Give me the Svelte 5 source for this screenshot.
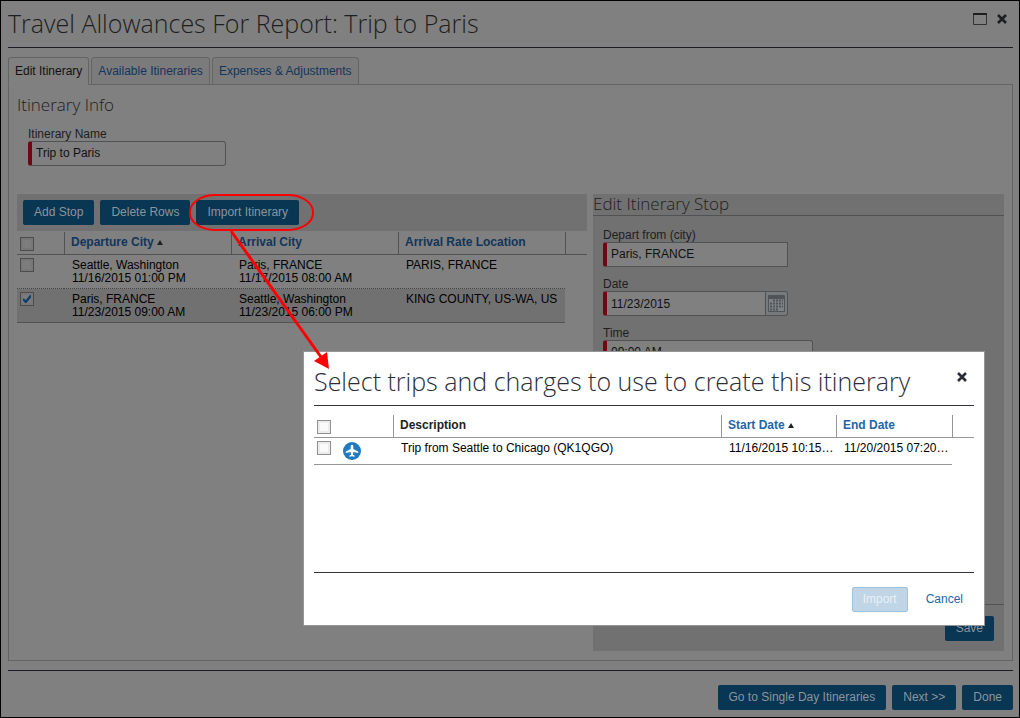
<script>
  let itineraryName = $state('Trip to Paris');
  let departCity = $state('Paris, FRANCE');
  let date = $state('11/23/2015');
  let time = $state('09:00 AM');
  const stops = $state([
    { checked: false, from: 'Seattle, Washington', departs: '11/16/2015 01:00 PM', to: 'Paris, FRANCE', arrives: '11/17/2015 08:00 AM', rate: 'PARIS, FRANCE' },
    { checked: true, from: 'Paris, FRANCE', departs: '11/23/2015 09:00 AM', to: 'Seattle, Washington', arrives: '11/23/2015 06:00 PM', rate: 'KING COUNTY, US-WA, US' }
  ]);
</script>

{#snippet cross()}
  <svg width="10" height="10" viewBox="0 0 10 10" aria-hidden="true"><path d="M1 1 9 9M9 1 1 9" fill="none" stroke="currentColor" stroke-width="2.6" /></svg>
{/snippet}

<div class="page">
  <header class="top">
    <h1>Travel Allowances For Report: Trip to Paris</h1>
    <div class="window-tools">
      <button class="icon" aria-label="Maximize">
        <svg width="14" height="12" viewBox="0 0 14 12" aria-hidden="true"><path d="M.5 1v10.5h13V1" fill="none" stroke="currentColor" stroke-opacity=".8" /><path d="M0 1h14" stroke="currentColor" stroke-width="2" /></svg>
      </button>
      <button class="icon" aria-label="Close">{@render cross()}</button>
    </div>
  </header>

  <nav class="tabs">
    <button class="tab active">Edit Itinerary</button>
    <button class="tab">Available Itineraries</button>
    <button class="tab">Expenses &amp; Adjustments</button>
  </nav>

  <main class="panel">
    <section class="info">
      <h2>Itinerary Info</h2>
      <div class="field name">
        <label for="name">Itinerary Name</label>
        <input id="name" type="text" bind:value={itineraryName} />
      </div>
    </section>

    <div class="columns">
      <section class="stops">
        <div class="toolbar">
          <button class="btn">Add Stop</button>
          <button class="btn">Delete Rows</button>
          <div class="marked">
            <button class="btn">Import Itinerary</button>
            <svg class="callout" width="150" height="182" viewBox="0 0 150 182" aria-hidden="true">
              <rect x="3" y="2" width="123" height="35" rx="25" ry="17" fill="none" stroke="red" stroke-width="2" />
              <path d="M44 38 134 164" stroke="red" stroke-width="3" />
              <path d="M142 176 127 168 140 159z" fill="red" />
            </svg>
          </div>
        </div>
        <table class="grid">
          <colgroup><col class="c-check" /><col /><col /><col /><col class="c-end" /></colgroup>
          <thead>
            <tr>
              <th><input type="checkbox" aria-label="Select all stops" /></th>
              <th><a href="#departure">Departure City</a><span class="sort"></span></th>
              <th><a href="#arrival">Arrival City</a></th>
              <th><a href="#rate">Arrival Rate Location</a></th>
              <th></th>
            </tr>
          </thead>
          <tbody>
            {#each stops as stop}
              <tr class:selected={stop.checked}>
                <td><input type="checkbox" aria-label="Select stop" bind:checked={stop.checked} /></td>
                <td>{stop.from}<br />{stop.departs}</td>
                <td>{stop.to}<br />{stop.arrives}</td>
                <td>{stop.rate}</td>
              </tr>
            {/each}
          </tbody>
        </table>
      </section>

      <section class="editor">
        <h2>Edit Itinerary Stop</h2>
        <div class="fields">
          <div class="field">
            <label for="city">Depart from (city)</label>
            <input id="city" class="square" type="text" bind:value={departCity} />
          </div>
          <div class="field">
            <label for="date">Date</label>
            <div class="date">
              <input id="date" type="text" bind:value={date} />
              <button aria-label="Choose date">
                <svg width="17" height="17" viewBox="0 0 17 17" aria-hidden="true">
                  <rect width="17" height="17" rx="1" fill="#505458" />
                  <path d="M1 4h15v12H1z" fill="#7d8286" />
                  <path d="M5 6h10M2 9h13M2 12h13M2 15h9" transform="translate(0 -.5)" stroke="#505458" stroke-width="2" stroke-dasharray="2 1" />
                </svg>
              </button>
            </div>
          </div>
          <div class="field time">
            <label for="time">Time</label>
            <input id="time" type="text" bind:value={time} />
          </div>
        </div>
        <div class="save"><button class="btn">Save</button></div>
      </section>
    </div>
  </main>

  <footer class="bottom">
    <button class="btn">Go to Single Day Itineraries</button>
    <button class="btn">Next &gt;&gt;</button>
    <button class="btn">Done</button>
  </footer>

  <div class="dialog" role="dialog" aria-labelledby="dialog-title">
    <header>
      <h1 id="dialog-title">Select trips and charges to use to create this itinerary</h1>
      <button class="icon" aria-label="Close dialog">{@render cross()}</button>
    </header>
    <div class="trips">
      <table class="grid">
        <colgroup><col class="d-check" /><col /><col class="d-start" /><col class="d-end" /><col class="c-end" /></colgroup>
        <thead>
          <tr>
            <th><input type="checkbox" aria-label="Select all trips" /></th>
            <th>Description</th>
            <th><a href="#start">Start Date</a><span class="sort"></span></th>
            <th><a href="#end">End Date</a></th>
            <th></th>
          </tr>
        </thead>
        <tbody>
          <tr>
            <td>
              <div class="pick">
                <input type="checkbox" aria-label="Select trip" />
                <svg width="18" height="19" viewBox="0 -1 18 19" aria-hidden="true">
                  <circle cx="9" cy="9" r="9" fill="#2079c1" />
                  <path d="M9 2.8c.9 0 1.3.8 1.3 1.7v2.4l4.900 2.600v1.600l-4.900-1.200-.3 2.800 1.700 1.100v1L9 14.200l-2.700.6v-1L8 12.700l-.3-2.800-4.900 1.200V9.500l4.900-2.600V4.500c0-.9.4-1.700 1.300-1.700z" fill="#fff" />
                </svg>
              </div>
            </td>
            <td>Trip from Seattle to Chicago (QK1QGO)</td>
            <td>11/16/2015 10:15…</td>
            <td>11/20/2015 07:20…</td>
          </tr>
        </tbody>
      </table>
    </div>
    <div class="actions">
      <button class="btn import" disabled>Import</button>
      <button class="cancel">Cancel</button>
    </div>
  </div>
</div>

<style>
  :global(body) { margin: 0; }
  .page, .page * { box-sizing: border-box; }
  .page {
    position: relative;
    display: flex;
    flex-direction: column;
    min-height: 100vh;
    padding: 0 6px 7px 7px;
    border: 1px solid #000;
    background: #808080;
    color: #1d1e20;
    font: 12px/13px "Liberation Sans", Arial, sans-serif;
  }
  button, input { font: inherit; color: inherit; margin: 0; }
  button { cursor: pointer; }
  h1, h2 { margin: 0; font-family: "Open Sans", sans-serif; font-weight: 300; }
  h1 { font-size: 25px; line-height: 35px; white-space: nowrap; }
  h2 { font-size: 17px; line-height: 21px; }
  .icon { display: flex; padding: 0; border: 0; background: none; }
  .top { display: flex; justify-content: space-between; height: 47px; padding: 5px 6px 0 0; border-bottom: 1px solid #1c1c22; }
  .window-tools { display: flex; gap: 10px; height: 26px; align-items: center; }
  .tabs { display: flex; gap: 2px; margin-top: 9px; position: relative; }
  .tab { height: 28px; padding: 0 6px; border: 1px solid #636465; border-radius: 3px 3px 0 0; background: #7b7b7b; color: #12355a; }
  .tab.active { border-bottom-color: #808080; background: #808080; color: #111; }
  .panel { display: flex; flex-direction: column; flex: 1; margin-top: -1px; padding: 0 8px 9px; border: 1px solid #636465; }
  .info { padding-top: 9px; }
  .name { width: 198px; margin: 13px 0 0 11px; }
  .field { display: flex; flex-direction: column; }
  input[type="text"] {
    width: 100%; height: 25px; padding: 0 4px 2px;
    border: 1px solid #515253; border-left: 4px solid #700713; border-radius: 3px;
    background: #808080; color: #111;
  }
  input.square { border-radius: 3px 0 0 3px; }
  .columns { display: flex; flex: 1; gap: 6px; margin-top: 28px; }
  .stops { flex: 0 0 570px; }
  .toolbar { display: flex; gap: 6px; height: 37px; padding: 6px; background: #717171; }
  .btn { height: 25px; padding: 0 11px; border: 0; border-radius: 2px; background: #083653; color: #8b959e; white-space: nowrap; }
  .marked { position: relative; }
  .callout { position: absolute; left: -9px; top: -7px; z-index: 3; pointer-events: none; }
  .grid { width: 100%; border-collapse: separate; border-spacing: 0; table-layout: fixed; color: #000; }
  .c-check { width: 47px; }
  .c-end { width: 22px; }
  th { height: 24px; padding: 0 7px; border-bottom: 1px solid #515253; text-align: left; background: linear-gradient(#515253, #515253) left 0 top 1px / 1px 100% no-repeat; }
  .grid th:first-child { background: none; }
  th a { color: #12355a; text-decoration: none; }
  td { padding: 4px 8px 3px; vertical-align: top; border-bottom: 1px dotted #444; white-space: nowrap; }
  .grid th:first-child, .grid td:first-child { padding-top: 3px; padding-left: 3px; }
  .selected td { background: #717171; border-bottom: 1px solid #515253; }
  .sort { display: inline-block; margin: 0 0 1px 3px; border: 3px solid transparent; border-top: 0; border-bottom: 5px solid #222; }
  input[type="checkbox"] { appearance: none; display: block; width: 14px; height: 14px; border: 1px solid #4b4c4d; background: #7d7d7d; box-shadow: inset 0 0 0 2px #777; }
  input[type="checkbox"]:checked { background: url("data:image/svg+xml,%3Csvg xmlns='http://www.w3.org/2000/svg' viewBox='0 0 12 12'%3E%3Cpath d='M2 6 4.800 9 10 2.500' fill='none' stroke='%23103e6a' stroke-width='2.400'/%3E%3C/svg%3E") #7d7d7d; }
  .editor { display: flex; flex-direction: column; flex: 1; background: #717171; }
  .editor h2 { height: 22px; line-height: 19px; border-bottom: 1px solid #515253; }
  .fields { display: flex; flex-direction: column; flex: 1; gap: 11px; padding: 13px 10px 0; border-bottom: 1px solid #515253; }
  .fields .field { width: 185px; }
  .fields .time { width: 210px; }
  .date { display: flex; }
  .date input[type="text"] { flex: 1; min-width: 0; border-radius: 3px 0 0 3px; padding-bottom: 0; }
  .date button { display: flex; align-items: center; justify-content: center; width: 22px; padding: 0; border: 1px solid #515253; border-left: 0; border-radius: 0 3px 3px 0; background: #787b7e; }
  .save { display: flex; justify-content: flex-end; padding: 11px 10px 10px; }
  .bottom { display: flex; justify-content: flex-end; gap: 6px; margin-top: 9px; padding-top: 14px; border-top: 1px solid #1c1c22; }

  .dialog { position: absolute; left: 302px; right: 34px; top: 350px; z-index: 2; display: flex; flex-direction: column; height: 275px; padding: 10px; border: 1px solid #969696; background: #fff; color: #2b2e38; }
  .dialog header { display: flex; justify-content: space-between; align-items: flex-start; padding: 2px 7px 6px 0; border-bottom: 1px solid #34363d; }
  .dialog header .icon { margin-top: 8px; }
  .trips { flex: 1; padding-top: 8px; border-bottom: 1px solid #34363d; }
  .trips th { border-color: #949698; background-image: linear-gradient(#949698, #949698); color: #222; }
  .trips a, .cancel { color: #1d66a8; }
  .trips td { height: 27px; padding-top: 4px; padding-bottom: 0; border-bottom: 1px solid #949698; }
  .trips input[type="checkbox"] { border-color: #8e9092; background: #fafafa; box-shadow: inset 0 0 0 2px #ececec; }
  .d-check { width: 79px; }
  .d-start { width: 115px; }
  .d-end { width: 116px; }
  .pick { display: flex; gap: 12px; align-items: flex-start; }
  .actions { display: flex; justify-content: flex-end; gap: 8px; padding: 14px 1px 3px 0; }
  .import { padding: 0 10px; border: 1px solid #9fc3de; background: #c0d5e6; color: #e8f1f8; }
  .cancel { height: 25px; padding: 0 10px; border: 0; background: none; }
</style>
